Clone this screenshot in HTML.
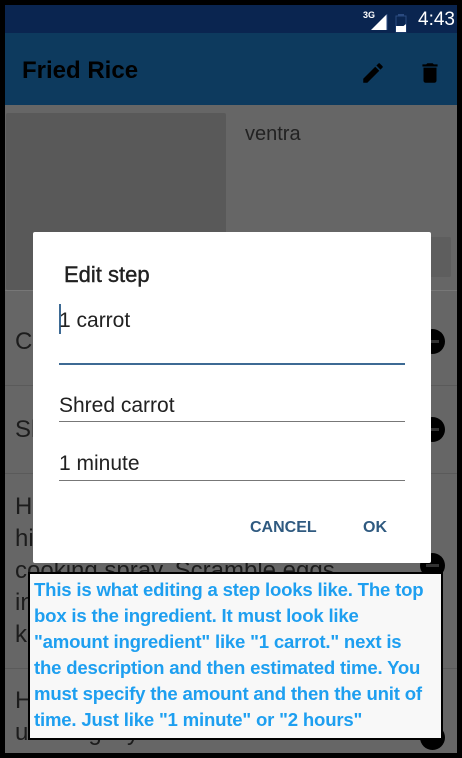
<!DOCTYPE html>
<html><head><meta charset="utf-8"><style>
*{margin:0;padding:0;box-sizing:border-box}
body{width:462px;height:758px;background:#000;position:relative;overflow:hidden;font-family:"Liberation Sans",sans-serif}
.abs{position:absolute}
#scr{left:5px;top:5px;width:452px;height:748px;background:#666;overflow:hidden}
.row{position:absolute;left:10px;font-size:24px;color:#1c1c1c;line-height:32px;white-space:nowrap}
.sep{position:absolute;left:0;width:452px;height:1px;background:#5a5a5a}
.circ{position:absolute;width:25px;height:25px;border-radius:50%;background:#000}
.circ:after{content:"";position:absolute;left:6px;top:11px;width:13px;height:3px;background:#333}
</style></head><body>
<div id="scr" class="abs">
  <div class="abs" style="left:0;top:0;width:452px;height:28px;background:#0a2550"></div>
  <div class="abs" style="left:0;top:28px;width:452px;height:72px;background:#0d3a5e"></div>
  <div class="abs" style="left:17px;top:52px;font-size:24px;font-weight:bold;color:#000">Fried Rice</div>
  <svg class="abs" style="left:355px;top:55px" width="26" height="26" viewBox="0 0 24 24"><path d="M3 17.25V21h3.75L17.81 9.94l-3.75-3.75L3 17.25zM20.71 7.04a1 1 0 0 0 0-1.41l-2.34-2.34a1 1 0 0 0-1.41 0l-1.83 1.83 3.75 3.75 1.83-1.83z" fill="#000"/></svg>
  <svg class="abs" style="left:412px;top:55px" width="26" height="26" viewBox="0 0 24 24"><path d="M6 19c0 1.1.9 2 2 2h8c1.1 0 2-.9 2-2V7H6v12zM19 4h-3.5l-1-1h-5l-1 1H5v2h14V4z" fill="#000"/></svg>
  <div class="abs" style="left:358px;top:5px;font-size:9px;font-weight:bold;color:#fff">3G</div>
  <svg class="abs" style="left:365px;top:8px" width="18" height="18"><polygon points="1,17 17,17 17,1" fill="#fff"/><polyline points="17,1 17,17" stroke="#2a4a80"/></svg>
  <svg class="abs" style="left:390px;top:8px" width="12" height="20"><rect x="1" y="3" width="10" height="16" fill="none" stroke="#2a4a80"/><rect x="3" y="1" width="6" height="2" fill="#2a4a80"/><polygon points="1,19 11,19 11,11 1,19" fill="#fff"/><rect x="1" y="13" width="10" height="6" fill="#fff"/><polygon points="1,13 11,13 4,19 1,19" fill="#fff"/></svg>
  <div class="abs" style="left:413px;top:4px;font-size:19px;color:#fff">4:43</div>

  <div class="abs" style="left:1px;top:108px;width:220px;height:177px;background:#595959;border-radius:2px"></div>
  <div class="abs" style="left:240px;top:118px;font-size:20px;color:#222">ventra</div>
  <div class="abs" style="left:236px;top:232px;width:210px;height:40px;background:#5e5e5e;border-radius:2px"></div>
  <div class="sep" style="top:285px;background:#777"></div>

  <div class="row" style="top:321px">C</div>
  <div class="circ" style="left:415px;top:324px"></div>
  <div class="sep" style="top:380px"></div>
  <div class="row" style="top:409px">Sh</div>
  <div class="circ" style="left:415px;top:412px"></div>
  <div class="sep" style="top:468px"></div>
  <div class="row" style="top:486px">H<br>hi<br>cooking spray. Scramble eggs<br>in<br>k</div>
  <div class="circ" style="left:415px;top:548px"></div>
  <div class="sep" style="top:663px"></div>
  <div class="row" style="top:680px">H<br>until slightly brown. Remove</div>
  <div class="circ" style="left:415px;top:720px"></div>
</div>

<div class="abs" style="left:33px;top:232px;width:398px;height:331px;background:#fff;border-radius:2px">
  <div class="abs" style="left:31px;top:30px;font-size:22px;color:#212121;-webkit-text-stroke:0.4px #212121">Edit step</div>
  <div class="abs" style="left:26px;top:72px;width:2px;height:30px;background:#3d6a94"></div>
  <div class="abs" style="left:26px;top:77px;font-size:21px;color:#212121">1 carrot</div>
  <div class="abs" style="left:26px;top:131px;width:346px;height:2px;background:#3d6a94"></div>
  <div class="abs" style="left:26px;top:162px;font-size:21px;color:#212121">Shred carrot</div>
  <div class="abs" style="left:26px;top:189px;width:346px;height:1px;background:#777"></div>
  <div class="abs" style="left:26px;top:220px;font-size:21px;color:#212121">1 minute</div>
  <div class="abs" style="left:26px;top:248px;width:346px;height:1px;background:#777"></div>
  <div class="abs" style="left:217px;top:287px;font-size:16px;font-weight:bold;color:#2f5a80">CANCEL</div>
  <div class="abs" style="left:330px;top:287px;font-size:16px;font-weight:bold;color:#2f5a80">OK</div>
</div>

<div class="abs" style="left:28px;top:572px;width:415px;height:168px;background:#f8f8f8;border:2px solid #000;padding:3px 0 0 4px;font-size:18.6px;font-weight:bold;color:#1e9ff0;line-height:26px;letter-spacing:-0.2px;white-space:nowrap">
This is what editing a step looks like. The top<br>box is the ingredient. It must look like<br>"amount ingredient" like "1 carrot." next is<br>the description and then estimated time. You<br>must specify the amount and then the unit of<br>time. Just like "1 minute" or "2 hours"
</div>
</body></html>
